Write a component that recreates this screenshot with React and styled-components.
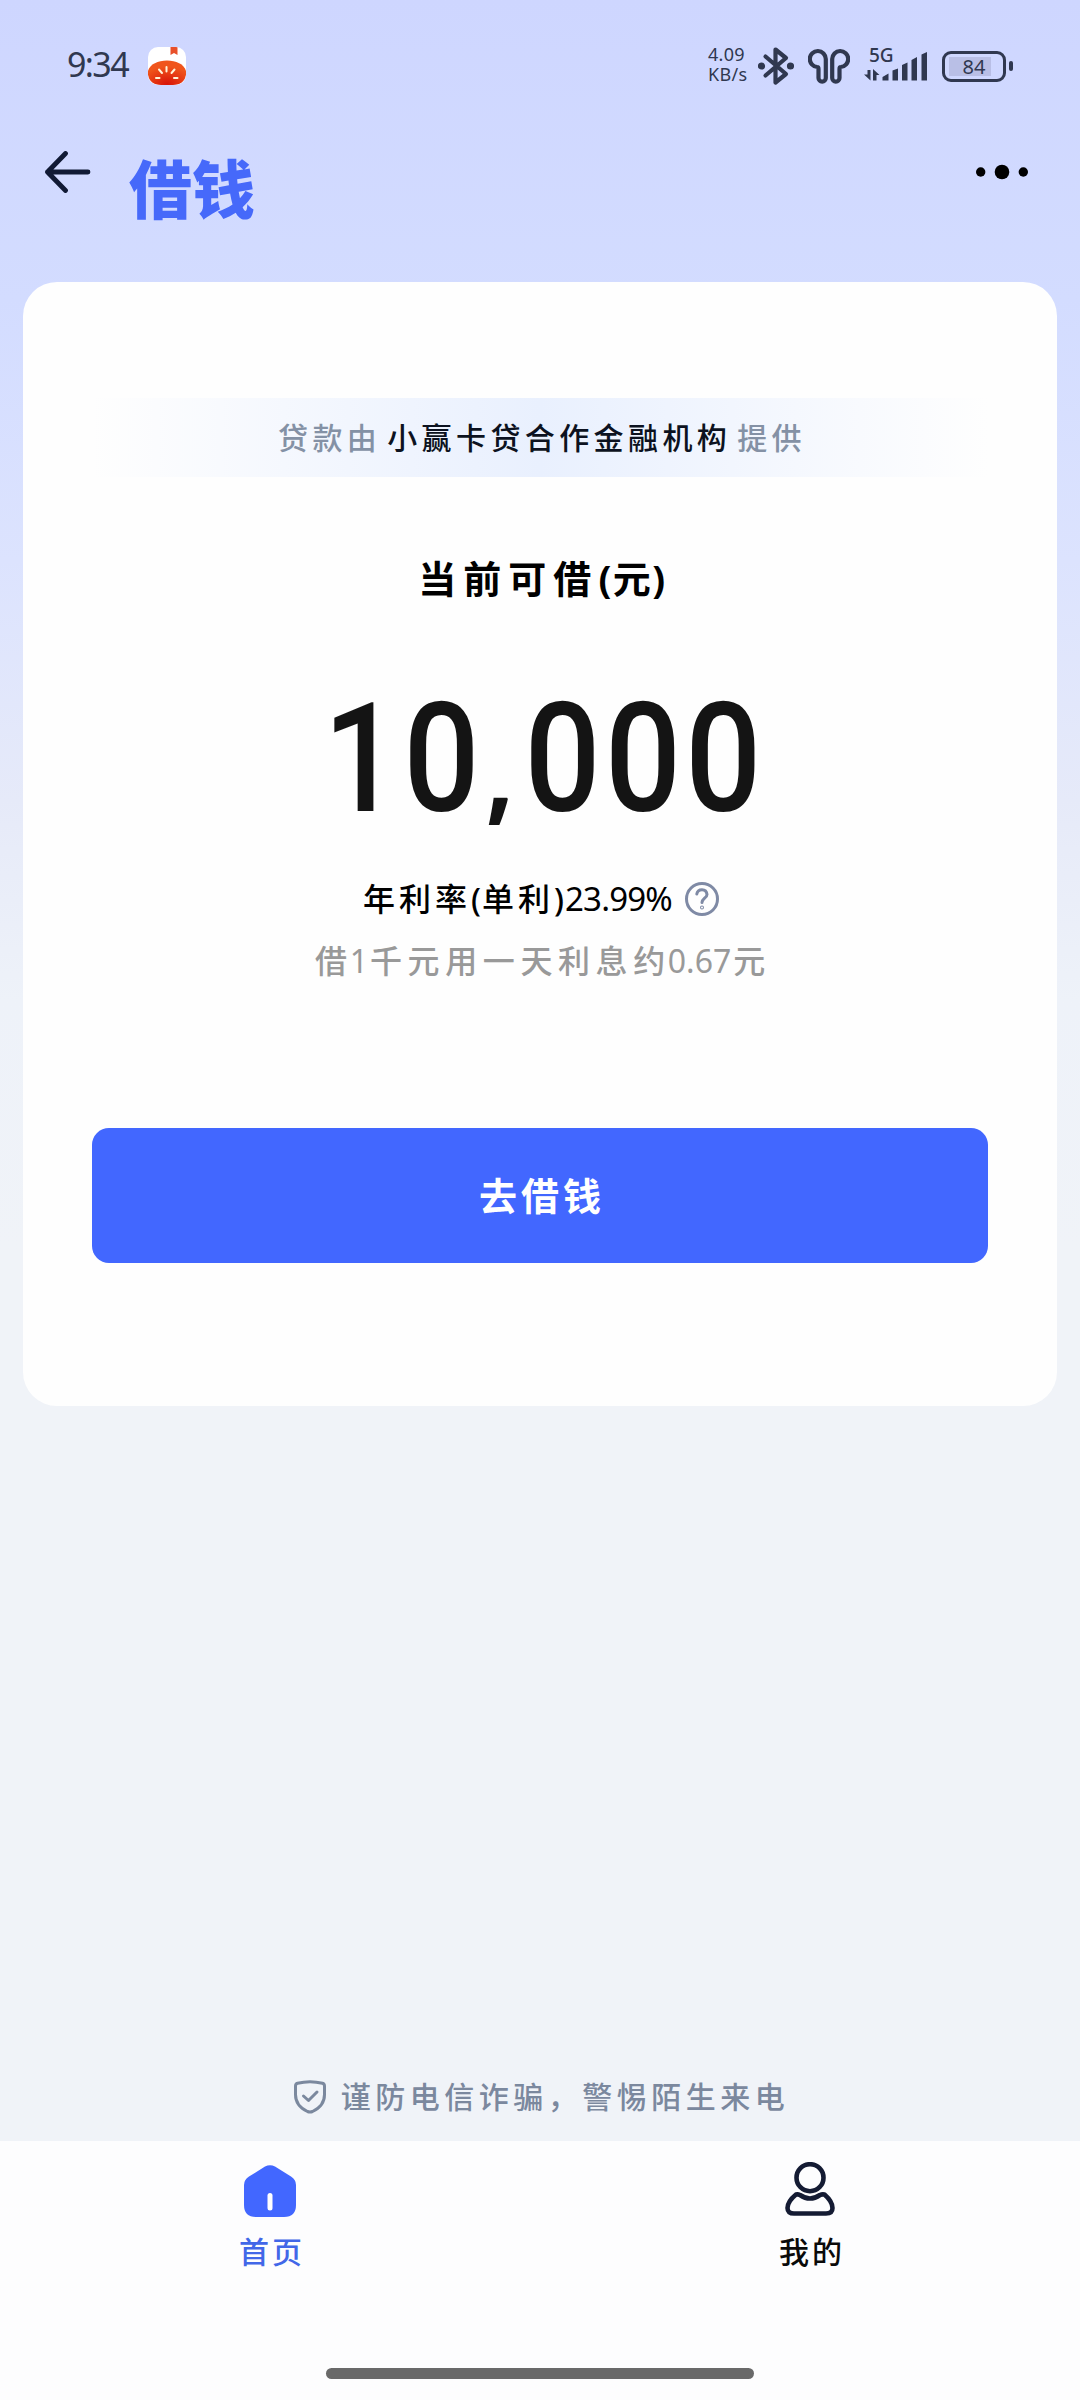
import React from 'react';
import styled, { createGlobalStyle } from 'styled-components';

const GlobalStyle = createGlobalStyle`
    * {
        box-sizing: border-box;
    }
    body {
        margin: 0;
        font-family: 'Noto Sans', 'Noto Sans CJK SC', sans-serif;
        color: #000;
    }
    svg {
        display: block;
        flex-shrink: 0;
    }
`;

function AppBadge() {
    return (
        <svg width="38" height="38" viewBox="0 0 38 38">
            <defs>
                <clipPath id="badge"><rect width="38" height="38" rx="10" /></clipPath>
                <radialGradient id="tomato" cx="0.5" cy="0.95" r="0.7">
                    <stop offset="0" stopColor="#d81408" />
                    <stop offset="1" stopColor="#f0551b" />
                </radialGradient>
            </defs>
            <g clipPath="url(#badge)">
                <rect width="38" height="38" fill="#fff" />
                <path d="M22.500 0h7v8l-3.500-2-3.500 2z" fill="#e8502a" />
                <path d="M0 24C2 17 10 13.500 19 13.500S36 17 38 24v4C37 35 31 38 25 38H13C7 38 1 35 0 28z" fill="url(#tomato)" />
                <path d="M18.500 20v4.500M11 22.500l3 3.500M26.500 22.500l-3 3.500M8 31h3.500M26 31h3.500" stroke="#fff4d8" strokeWidth="2" strokeLinecap="round" />
            </g>
        </svg>
    );
}

function BluetoothIcon() {
    return (
        <svg width="36" height="40" viewBox="0 0 36 40" fill="none" stroke="#303850" strokeWidth="4.200" strokeLinejoin="round" strokeLinecap="round">
            <path d="M7.500 10.500L28 28 17.500 36.500V3.500L28 12 7.500 29.500" />
            <circle cx="3.500" cy="20" r="1.500" fill="#303850" />
            <circle cx="32.500" cy="20" r="1.500" fill="#303850" />
        </svg>
    );
}

function EarbudsIcon() {
    return (
        <svg width="42" height="36" viewBox="0 0 42 36" fill="none" stroke="#303850" strokeWidth="4.200" strokeLinejoin="round">
            <path d="M17.800 11A8 8 0 1 0 9.300 19Q10.500 19 10.500 21V30A3.600 3.600 0 0 0 17.800 30Z" />
            <path d="M24.200 11A8 8 0 1 1 32.700 19Q31.500 19 31.500 21V30A3.600 3.600 0 0 1 24.200 30Z" />
        </svg>
    );
}

function SignalIcon() {
    return (
        <svg width="64" height="30" viewBox="0 0 64 30" fill="#303850">
            <path d="M3.500 19h3v10.500L0 23.500h3.500zM9 29.500V18l6.500 6h-3v5.500z" />
            <path d="M18.500 26l6-3.500V29.500h-6zM28.500 19.500l5.500-2v12h-5.500zM38 14l5.500-2.500v18H38zM47.500 9l5.500-3v23.500h-5.500zM57.500 3.500L63 1v28.500h-5.500z" />
        </svg>
    );
}

function BackIcon() {
    return (
        <svg width="46" height="42" viewBox="0 0 46 42" fill="none" stroke="#111a35" strokeWidth="4.800" strokeLinecap="round" strokeLinejoin="round">
            <path d="M20.500 2.500L2.500 21l18 18.500M2.500 21h40.500" />
        </svg>
    );
}

function MoreIcon() {
    return (
        <svg width="52" height="16" viewBox="0 0 52 16">
            <circle cx="4.700" cy="8" r="4.700" />
            <circle cx="26" cy="8" r="7.300" />
            <circle cx="47.300" cy="8" r="4.700" />
        </svg>
    );
}

function HelpIcon() {
    return (
        <svg width="36" height="36" viewBox="0 0 36 36" fill="none" stroke="#7f8aa5" strokeWidth="3" strokeLinecap="round">
            <circle cx="18" cy="18" r="15.500" />
            <path d="M12.800 13Q13.500 8.700 18 8.700T23 13.500C23 17 18 17.500 18 21.500" />
            <circle cx="18" cy="26.500" r="0.500" />
        </svg>
    );
}

function ShieldIcon() {
    return (
        <svg width="32" height="34" viewBox="0 0 32 34" fill="none" stroke="#7b889e" strokeWidth="3" strokeLinecap="round" strokeLinejoin="round">
            <path d="M3.500 3.300Q16 0 28.500 3.300 30.500 3.800 30.500 6V14.500C30.500 23.500 25 28.500 18.500 31.500Q16 32.500 13.500 31.500C7 28.500 1.500 23.500 1.500 14.500V6Q1.500 3.800 3.500 3.300z" />
            <path d="M9.500 16l5 4.500 8.500-8.500" />
        </svg>
    );
}

function HouseIcon() {
    return (
        <svg width="52" height="52" viewBox="0 0 52 52">
            <path d="M21 1.500Q26-1 31 1.500L47 11.500Q52 14.500 52 20V40Q52 52 40 52H12Q0 52 0 40V20Q0 14.500 5 11.500z" fill="#4267ff" />
            <path d="M26 30.500V43" stroke="#fff" strokeWidth="5" strokeLinecap="round" />
        </svg>
    );
}

function PersonIcon() {
    return (
        <svg width="50" height="54" viewBox="0 0 50 54" fill="none" stroke="#141b33" strokeWidth="4.600" strokeLinejoin="round">
            <circle cx="25" cy="15.700" r="13.500" />
            <path d="M11 32.500Q13 32 15 33 25 40 35 33 37 32 39.500 32.500 47.500 39.500 47.500 46 47.500 51.500 41 51.500H9Q2.500 51.500 2.500 46 2.500 39.500 11 32.500z" />
        </svg>
    );
}

export default function App() {
    return (
        <Page>
            <GlobalStyle />
            <StatusBar>
                <Clock>9:34</Clock>
                <AppBadge />
                <Indicators>
                    <Speed>
                        <span>4.09</span>
                        <span>KB/s</span>
                    </Speed>
                    <BluetoothIcon />
                    <Earbuds>
                        <EarbudsIcon />
                    </Earbuds>
                    <Network>
                        <SignalIcon />
                        <NetworkLabel>5G</NetworkLabel>
                    </Network>
                    <Battery>
                        <BatteryBody>
                            <BatteryLevel>84</BatteryLevel>
                        </BatteryBody>
                        <BatteryTip />
                    </Battery>
                </Indicators>
            </StatusBar>
            <Header>
                <BackIcon />
                <Title>借钱</Title>
                <MoreIcon />
            </Header>
            <Card>
                <Provider>
                    <span>贷款由</span>
                    <strong>小赢卡贷合作金融机构</strong>
                    <span>提供</span>
                </Provider>
                <Label>当前可借<span>(元)</span></Label>
                <Amount>10<Comma>,</Comma>000</Amount>
                <Rate>
                    <RateText>年利率<i>(</i>单利<i>)</i></RateText>
                    <RateValue>23.99%</RateValue>
                    <HelpIcon />
                </Rate>
                <Interest>借<b>1</b>千元用一天利息约<b>0.67</b>元</Interest>
                <BorrowButton>去借钱</BorrowButton>
            </Card>
            <Notice>
                <ShieldIcon />
                <span>谨防电信诈骗，警惕陌生来电</span>
            </Notice>
            <TabBar>
                <Tab $active>
                    <HouseIcon />
                    <span>首页</span>
                </Tab>
                <Tab>
                    <PersonIcon />
                    <span>我的</span>
                </Tab>
            </TabBar>
            <HomeIndicator />
        </Page>
    );
}

const Page = styled.div`
    width: 1080px;
    height: 2400px;
    display: flex;
    flex-direction: column;
    overflow: hidden;
    background: linear-gradient(180deg, #ced6ff 0, #d3dcff 300px, #dce3fe 560px, #e6eaf9 800px, #eef2f9 1000px, #f0f3f8 1250px, #f0f3f8 100%);
`;

const StatusBar = styled.div`
    height: 130px;
    display: flex;
    align-items: center;
    padding: 2px 67px 0 67px;
    color: #303850;
`;

const Clock = styled.div`
    width: 81px;
    margin-top: -4px;
    font-size: 34px;
    line-height: 40px;
    letter-spacing: -1.600px;
`;

const Indicators = styled.div`
    display: flex;
    align-items: center;
    margin-left: auto;
`;

const Speed = styled.div`
    width: 50px;
    margin-top: -5px;
    display: flex;
    flex-direction: column;
    font-size: 18px;
    line-height: 20px;
    letter-spacing: 0.3px;
`;

const Earbuds = styled.div`
    margin-left: 14px;
`;

const Network = styled.div`
    position: relative;
    margin-left: 14px;
`;

const NetworkLabel = styled.span`
    position: absolute;
    left: 5px;
    top: -6px;
    font-size: 19px;
    line-height: 20px;
    font-weight: 500;
`;

const Battery = styled.div`
    display: flex;
    align-items: center;
    gap: 3px;
    margin-left: 14px;
`;

const BatteryBody = styled.div`
    width: 64px;
    height: 31px;
    padding: 3px 12px 3px 4px;
    border: 3px solid #303850;
    border-radius: 9px;
`;

const BatteryLevel = styled.div`
    height: 19px;
    padding-left: 8px;
    background: #b9bfe6;
    font-size: 20px;
    line-height: 20px;
    text-align: center;
`;

const BatteryTip = styled.div`
    width: 4px;
    height: 10px;
    border-radius: 2px;
    background: #303850;
`;

const Header = styled.header`
    height: 152px;
    display: flex;
    align-items: flex-start;
    padding: 0 52px 0 45px;
    svg:first-child {
        margin-top: 21px;
    }
    svg:last-child {
        margin: 34px 0 0 auto;
    }
`;

const Title = styled.h1`
    margin: 25px 0 0 38px;
    font-size: 63px;
    line-height: 68px;
    font-weight: 900;
    color: #4669fa;
`;

const Card = styled.main`
    height: 1124px;
    margin: 0 23px;
    display: flex;
    flex-direction: column;
    align-items: center;
    border-radius: 34px;
    background: #fefefe;
`;

const Provider = styled.div`
    width: 896px;
    height: 79px;
    margin-top: 116px;
    padding: 0 0 4px 4px;
    display: flex;
    align-items: center;
    justify-content: center;
    gap: 6px;
    background: linear-gradient(90deg, rgba(232, 239, 254, 0) 0, #e9f0fe 50%, rgba(232, 239, 254, 0) 100%);
    font-size: 30px;
    font-weight: 500;
    letter-spacing: 4.400px;
    color: #8491a5;
    strong {
        font-weight: 500;
        color: #0c1220;
    }
`;

const Label = styled.div`
    margin: 73px 0 0 5px;
    font-size: 38px;
    line-height: 56px;
    font-weight: 700;
    letter-spacing: 7px;
    white-space: nowrap;
    span {
        letter-spacing: 1.500px;
    }
`;

const Amount = styled.div`
    height: 150px;
    margin: 78px 0 0 8px;
    font-family: Roboto, sans-serif;
    font-size: 152px;
    line-height: 150px;
    font-weight: 500;
    letter-spacing: 5px;
    color: #141414;
    white-space: nowrap;
    transform: scaleX(0.88);
`;

const Comma = styled.span`
    display: inline-block;
    width: 46px;
    font-family: 'Open Sans', sans-serif;
    font-size: 112px;
    line-height: 100px;
    font-weight: 700;
    text-indent: 2px;
`;

const Rate = styled.div`
    height: 50px;
    margin: 40px 0 0 3px;
    display: flex;
    align-items: center;
    font-size: 32px;
    line-height: 50px;
`;

const RateText = styled.span`
    font-weight: 500;
    letter-spacing: 4px;
    i {
        font-style: normal;
        letter-spacing: 1px;
    }
`;

const RateValue = styled.span`
    margin-right: 12px;
    font-size: 33px;
    letter-spacing: -0.8px;
`;

const Interest = styled.div`
    margin: 12px 0 0 6px;
    font-size: 32px;
    line-height: 50px;
    font-weight: 500;
    letter-spacing: 5.600px;
    color: #999;
    white-space: nowrap;
    b {
        margin: 0 2px 0 -3px;
        font-weight: 400;
        letter-spacing: 0;
    }
`;

const BorrowButton = styled.button`
    width: 896px;
    height: 135px;
    margin-top: 142px;
    padding: 0 0 4px 4px;
    border: 0;
    border-radius: 17px;
    background: #4267ff;
    color: #fff;
    font-family: inherit;
    font-size: 38px;
    font-weight: 700;
    letter-spacing: 4px;
`;

const Notice = styled.div`
    height: 88px;
    margin-top: auto;
    padding-left: 3px;
    display: flex;
    align-items: center;
    justify-content: center;
    gap: 15px;
    font-size: 30px;
    font-weight: 500;
    letter-spacing: 4.500px;
    color: #7b889e;
    span {
        margin-top: -4px;
    }
`;

const TabBar = styled.nav`
    height: 227px;
    display: flex;
    background: #fdfdfe;
`;

const Tab = styled.div`
    flex: 1;
    display: flex;
    flex-direction: column;
    align-items: center;
    justify-content: flex-start;
    padding-top: ${(props) => (props.$active ? '24px' : '21px')};
    font-size: 30px;
    font-weight: 500;
    color: ${(props) => (props.$active ? '#4267e8' : '#0a0a0a')};
    span {
        margin-top: ${(props) => (props.$active ? '13px' : '14px')};
        padding-left: 4px;
        line-height: 44px;
        letter-spacing: 3px;
    }
`;

const HomeIndicator = styled.div`
    height: 32px;
    background: #fdfdfe;
    &::before {
        content: '';
        display: block;
        width: 428px;
        height: 11px;
        margin: 0 auto;
        border-radius: 6px;
        background: #696969;
    }
`;
